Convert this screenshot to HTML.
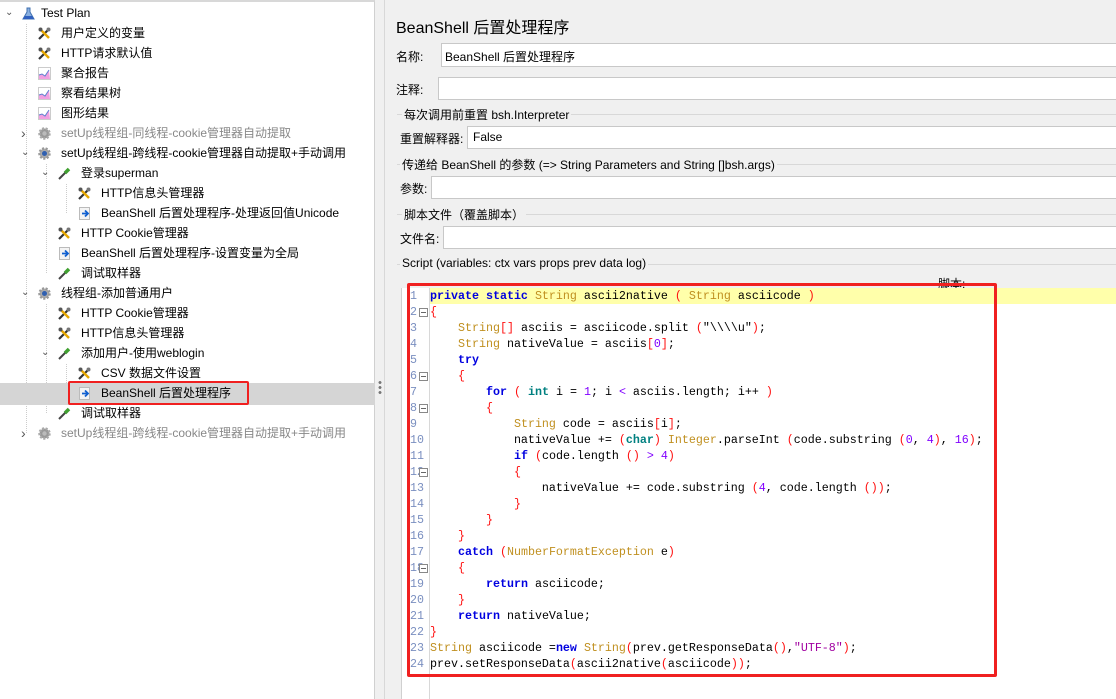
<!DOCTYPE html>
<html><head><meta charset="utf-8"><style>
*{margin:0;padding:0;box-sizing:border-box}
body{width:1116px;height:699px;overflow:hidden;background:#f0f0f0;font-family:"Liberation Sans","Noto Sans CJK SC",sans-serif;font-size:12px;color:#000;position:relative}
.abs{position:absolute}
#tree{left:0;top:0;width:375px;height:699px;background:#fff;border-top:2px solid #d8d8d8;border-right:1px solid #d0d0d0}
.row{position:absolute;left:0;width:375px;height:20px;line-height:20px;white-space:nowrap}
.row .t{position:absolute;top:0}
.row .ic{position:absolute;top:4px;width:13px;height:13px}
.arr{position:absolute;top:0;font-size:10px;color:#555}
.gray{color:#888}
.lbl{position:absolute;white-space:nowrap;font-size:12px}
.box{position:absolute;background:#fff;border:1px solid #c8c8c8;right:-2px}
.grp{position:absolute;left:397px;right:0;height:1px;background:#d8d8d8}
.code{position:absolute;left:401px;top:288px;right:0;bottom:0;background:#fff;border-left:1px solid #d0d0d0}
.ln{position:absolute;left:410px;width:20px;font:11.67px "Liberation Mono",monospace;color:#7a8fc0;line-height:16px}
.cl{position:absolute;left:430px;font:11.67px "Liberation Mono",monospace;line-height:16px;white-space:pre;color:#000}
.k{color:#0000e0;font-weight:bold}.ty{color:#c09020}.p{color:#ff1010}.n{color:#8000ff}.tl{color:#008080;font-weight:bold}.s{color:#a000a0}
.fold{position:absolute;left:419px;width:9px;height:9px;border:1px solid #888;background:#fff}
.fold:after{content:"";position:absolute;left:1px;top:3px;width:5px;height:1px;background:#666}
</style></head><body>
<div id="tree" class="abs">
<svg class="abs" style="left:0;top:0" width="375" height="450">
<g stroke="#ccc" stroke-dasharray="1,1">
<line x1="26.5" y1="22" x2="26.5" y2="432"/>
<line x1="46.5" y1="162" x2="46.5" y2="272"/>
<line x1="66.5" y1="182" x2="66.5" y2="212"/>
<line x1="46.5" y1="302" x2="46.5" y2="412"/>
<line x1="66.5" y1="362" x2="66.5" y2="392"/>
</g></svg>
<div class="abs" style="left:0;top:381px;width:375px;height:22px;background:#d5d5d5"></div>
</div>
<div class="abs" style="left:68px;top:381px;width:181px;height:24px;border:2px solid #f02020;border-radius:2px"></div>
<div id="rows"></div>
<div class="abs" style="left:384px;top:0;width:1px;height:699px;background:#d8d8d8"></div>
<div class="abs" style="left:378px;top:380px;width:4px;height:14px;background:radial-gradient(circle,#777 1.3px,transparent 1.6px) 0 0/4px 5px"></div>

<div class="lbl" style="left:396px;top:14px;font-size:16px">BeanShell 后置处理程序</div>
<div class="lbl" style="left:396px;top:48px">名称:</div>
<div class="box" style="left:441px;top:43px;height:24px;padding:4px 0 0 3px">BeanShell 后置处理程序</div>
<div class="lbl" style="left:396px;top:81px">注释:</div>
<div class="box" style="left:438px;top:77px;height:23px"></div>
<div class="grp" style="top:114px"></div>
<div class="lbl" style="left:402px;top:106px;background:#f0f0f0;padding:0 2px">每次调用前重置 bsh.Interpreter</div>
<div class="lbl" style="left:400px;top:130px">重置解释器:</div>
<div class="box" style="left:467px;top:126px;height:23px;padding:3px 0 0 5px">False</div>
<div class="grp" style="top:164px"></div>
<div class="lbl" style="left:400px;top:156px;background:#f0f0f0;padding:0 2px">传递给 BeanShell 的参数 (=&gt; String Parameters and String []bsh.args)</div>
<div class="lbl" style="left:400px;top:180px">参数:</div>
<div class="box" style="left:431px;top:176px;height:23px"></div>
<div class="grp" style="top:214px"></div>
<div class="lbl" style="left:402px;top:206px;background:#f0f0f0;padding:0 2px">脚本文件（覆盖脚本）</div>
<div class="lbl" style="left:400px;top:230px">文件名:</div>
<div class="box" style="left:443px;top:226px;height:23px"></div>
<div class="grp" style="top:264px"></div>
<div class="lbl" style="left:400px;top:256px;background:#f0f0f0;padding:0 2px">Script (variables: ctx vars props prev data log)</div>
<div class="lbl" style="left:938px;top:275px">脚本:</div>

<div class="code"></div>
<div class="abs" style="left:429px;top:288px;width:1px;height:411px;background:#d8d8d8"></div>
<div class="abs" style="left:430px;top:288px;right:0;height:16px;background:#ffffaa"></div>
<div id="code"></div>
<div class="abs" style="left:407px;top:283px;width:590px;height:394px;border:3px solid #f02020;border-radius:2px"></div>

<script>
var rows=[
[0,'v','flask','Test Plan'],
[1,'','wr','用户定义的变量'],
[1,'','wr','HTTP请求默认值'],
[1,'','gr','聚合报告'],
[1,'','gr','察看结果树'],
[1,'','gr','图形结果'],
[1,'>','gear','setUp线程组-同线程-cookie管理器自动提取','gray'],
[1,'v','gearb','setUp线程组-跨线程-cookie管理器自动提取+手动调用'],
[2,'v','pip','登录superman'],
[3,'','wr','HTTP信息头管理器'],
[3,'','bs','BeanShell 后置处理程序-处理返回值Unicode'],
[2,'','wr','HTTP Cookie管理器'],
[2,'','bs','BeanShell 后置处理程序-设置变量为全局'],
[2,'','pip','调试取样器'],
[1,'v','gearb','线程组-添加普通用户'],
[2,'','wr','HTTP Cookie管理器'],
[2,'','wr','HTTP信息头管理器'],
[2,'v','pip','添加用户-使用weblogin'],
[3,'','wr','CSV 数据文件设置'],
[3,'','bs','BeanShell 后置处理程序'],
[2,'','pip','调试取样器'],
[1,'>','gear','setUp线程组-跨线程-cookie管理器自动提取+手动调用','gray']];
var icons={
wr:'<svg class="ic" viewBox="0 0 13 13"><path d="M1 12L11 2" stroke="#333" stroke-width="2.2"/><path d="M2 2L11 11" stroke="#e8a800" stroke-width="2.4"/><circle cx="2.5" cy="2.5" r="2" fill="#555"/><circle cx="10.5" cy="2.5" r="2" fill="#777"/></svg>',
gr:'<svg class="ic" viewBox="0 0 13 13"><rect x="0.5" y="0.5" width="12" height="12" fill="#fff" stroke="#ccc"/><path d="M1 12L1 8L4 7L7 9L11 3L12 12Z" fill="#f0a0e0"/><path d="M1 8L4 7L7 9L11 3" stroke="#6080d0" fill="none"/></svg>',
gear:'<svg class="ic" viewBox="0 0 13 13"><circle cx="6.5" cy="6.5" r="5" fill="#999" stroke="#aaa" stroke-width="2.5" stroke-dasharray="2,1.5"/><circle cx="6.5" cy="6.5" r="2.2" fill="#bbb"/></svg>',
gearb:'<svg class="ic" viewBox="0 0 13 13"><circle cx="6.5" cy="6.5" r="5" fill="#aaa" stroke="#999" stroke-width="2.5" stroke-dasharray="2,1.5"/><circle cx="6.5" cy="6.5" r="2.5" fill="#3060b0"/></svg>',
pip:'<svg class="ic" viewBox="0 0 13 13"><path d="M1 12L8 5" stroke="#444" stroke-width="2"/><path d="M7 6L11 2" stroke="#40a030" stroke-width="3.5"/></svg>',
bs:'<svg class="ic" viewBox="0 0 13 13"><rect x="1.5" y="0.5" width="10" height="12" fill="#f4f4f4" stroke="#bbb"/><path d="M4 6.5H10M7 3.5L10 6.5L7 9.5" stroke="#1060d0" stroke-width="1.8" fill="none"/></svg>',
flask:'<svg class="ic" viewBox="0 0 13 13"><path d="M5 1H8V5L12 12H1L5 5Z" fill="#8ab0e0" stroke="#4070b0"/><path d="M3 9H10L12 12H1Z" fill="#3060c0"/></svg>'};
var h='';
rows.forEach(function(r,i){var lv=r[0],top=3+20*i;
var ix=22+20*lv-4*(lv>0?1:0);ix=lv==0?22:(18+20*lv);var tx=ix+23;if(lv==0)tx=41;
h+='<div class="row" style="top:'+top+'px">';
if(r[1])h+='<span class="arr" style="left:'+(ix-17)+'px">'+(r[1]=='v'?'&#8964;':'&#8250;').replace('&#8250;','<b style="font-size:14px;font-weight:normal">&#8250;</b>')+'</span>';
h+=icons[r[2]].replace('class="ic"','class="ic" style="left:'+ix+'px"');
h+='<span class="t '+(r[4]||'')+'" style="left:'+tx+'px">'+r[3]+'</span></div>';});
document.getElementById('rows').innerHTML=h;
var P=function(s){return '<span class="p">'+s+'</span>'},K=function(s){return '<span class="k">'+s+'</span>'},T=function(s){return '<span class="ty">'+s+'</span>'},N=function(s){return '<span class="n">'+s+'</span>'},L=function(s){return '<span class="tl">'+s+'</span>'};
var code=[
K('private static')+' '+T('String')+' ascii2native '+P('(')+' '+T('String')+' asciicode '+P(')'),
P('{'),
'    '+T('String')+P('[]')+' asciis = asciicode.split '+P('(')+'"\\\\\\\\u"'+P(')')+';',
'    '+T('String')+' nativeValue = asciis'+P('[')+N('0')+P(']')+';',
'    '+K('try'),
'    '+P('{'),
'        '+K('for')+' '+P('(')+' '+L('int')+' i = '+N('1')+'; i '+N('&lt;')+' asciis.length; i++ '+P(')'),
'        '+P('{'),
'            '+T('String')+' code = asciis'+P('[')+'i'+P(']')+';',
'            nativeValue += '+P('(')+L('char')+P(')')+' '+T('Integer')+'.parseInt '+P('(')+'code.substring '+P('(')+N('0')+', '+N('4')+P(')')+', '+N('16')+P(')')+';',
'            '+K('if')+' '+P('(')+'code.length '+P('()')+' '+N('&gt;')+' '+N('4')+P(')'),
'            '+P('{'),
'                nativeValue += code.substring '+P('(')+N('4')+', code.length '+P('()')+P(')')+';',
'            '+P('}'),
'        '+P('}'),
'    '+P('}'),
'    '+K('catch')+' '+P('(')+T('NumberFormatException')+' e'+P(')'),
'    '+P('{'),
'        '+K('return')+' asciicode;',
'    '+P('}'),
'    '+K('return')+' nativeValue;',
P('}'),
T('String')+' asciicode ='+K('new')+' '+T('String')+P('(')+'prev.getResponseData'+P('()')+',<span class="s">"UTF-8"</span>'+P(')')+';',
'prev.setResponseData'+P('(')+'ascii2native'+P('(')+'asciicode'+P('))')+';'];
var folds=[2,6,8,12,18];
var c='';code.forEach(function(s,i){var t=288+16*i;c+='<div class="ln" style="top:'+t+'px">'+(i+1)+'</div><div class="cl" style="top:'+t+'px">'+s+'</div>';if(folds.indexOf(i+1)>=0)c+='<div class="fold" style="top:'+(t+4)+'px"></div>';});
document.getElementById('code').innerHTML=c;
</script>
</body></html>
